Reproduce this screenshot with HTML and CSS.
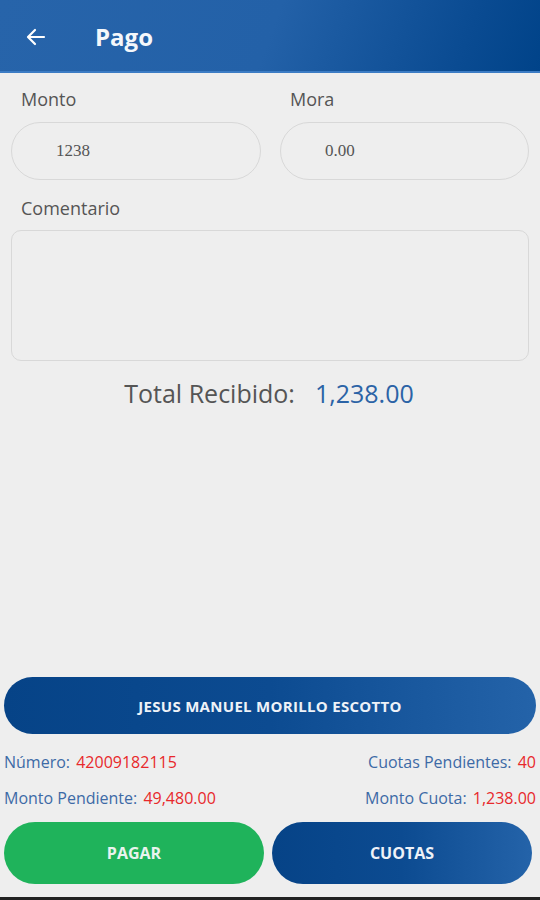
FILE: index.html
```html
<!DOCTYPE html>
<html lang="es">
<head>
<meta charset="utf-8">
<title>Pago</title>
<link rel="stylesheet" href="styles.css">
</head>
<body>
<div class="screen">
  <header class="appbar">
    <svg class="back" width="24" height="24" viewBox="0 0 24 24"><path d="M20 12H5M11 5l-7 7 7 7" fill="none" stroke="#fff" stroke-width="2.2" stroke-linecap="round" stroke-linejoin="round"/></svg>
    <h1 class="title">Pago</h1>
  </header>
  <main class="form">
    <div class="row2">
      <div class="field">
        <label class="label">Monto</label>
        <div class="pill-input">1238</div>
      </div>
      <div class="field">
        <label class="label">Mora</label>
        <div class="pill-input">0.00</div>
      </div>
    </div>
    <div class="field comment">
      <label class="label">Comentario</label>
      <div class="textarea"></div>
    </div>
    <div class="total">
      <span class="total-label">Total Recibido:</span>
      <span class="total-value">1,238.00</span>
    </div>
  </main>
  <section class="footer">
    <div class="name-bar">JESUS MANUEL MORILLO ESCOTTO</div>
    <div class="info">
      <div class="info-row">
        <span><span class="k">Número:</span> <span class="v">42009182115</span></span>
        <span><span class="k">Cuotas Pendientes:</span> <span class="v">40</span></span>
      </div>
      <div class="info-row">
        <span><span class="k">Monto Pendiente:</span> <span class="v">49,480.00</span></span>
        <span><span class="k">Monto Cuota:</span> <span class="v">1,238.00</span></span>
      </div>
    </div>
    <div class="actions">
      <button class="btn green">PAGAR</button>
      <button class="btn blue">CUOTAS</button>
    </div>
  </section>
  <div class="navbar"></div>
</div>
</body>
</html>
```
FILE: styles.css
```css
* { box-sizing: border-box; }
html, body { margin: 0; padding: 0; }
body {
  background: #eeeeee;
  font-family: "Open Sans", Lato, sans-serif;
  color: #555;
}
.screen {
  width: 540px;
  height: 900px;
  display: flex;
  flex-direction: column;
  overflow: hidden;
}
.appbar {
  height: 73px;
  flex: none;
  display: flex;
  align-items: center;
  padding: 2px 0 0 24px;
  background: linear-gradient(110deg, #2764aa 0%, #2361a8 50%, #0a4b92 85%, #004389 100%);
  border-bottom: 2px solid #3c7cc4;
}
.back { display: block; }
.title {
  margin: 0 0 0 47px;
  font-family: "Open Sans", sans-serif;
  font-weight: 700;
  font-size: 24px;
  line-height: 30px;
  color: #f4f7fb;
}
.form {
  flex: 1;
  padding: 14px 11px 0 11px;
}
.row2 {
  display: grid;
  grid-template-columns: 250px 249px;
  column-gap: 19px;
}
.label {
  display: block;
  font-size: 18px;
  color: #555;
  padding-left: 10px;
  height: 24px;
  line-height: 24px;
}
.pill-input {
  margin-top: 11px;
  height: 58px;
  border: 1.5px solid #d8d8d8;
  border-radius: 29px;
  padding-left: 44px;
  display: flex;
  align-items: center;
  font-family: "Liberation Serif", serif;
  font-size: 17px;
  color: #555;
}
.comment { margin-top: 16px; }
.textarea {
  margin-top: 10px;
  height: 131px;
  border: 1.5px solid #d8d8d8;
  border-radius: 10px;
}
.total {
  margin-top: 16px;
  display: flex;
  justify-content: center;
  gap: 20px;
  font-size: 25px;
  line-height: 32px;
  padding-right: 2px;
}
.total-label { color: #555; }
.total-value { color: #2b63a6; }
.footer {
  flex: none;
  padding: 0 4px 13px 4px;
}
.name-bar {
  height: 57px;
  border-radius: 29px;
  background: linear-gradient(90deg, #064387 0%, #0c4b91 50%, #2463a9 100%);
  color: #eef2f8;
  font-weight: 700;
  font-size: 15px;
  letter-spacing: 0.3px;
  display: flex;
  align-items: center;
  justify-content: center;
}
.info {
  margin-top: 17px;
  display: flex;
  flex-direction: column;
  gap: 14px;
}
.info-row {
  display: flex;
  justify-content: space-between;
  font-size: 16px;
  line-height: 22px;
}
.k { color: #3d6aa6; }
.v { color: #e8282b; margin-left: 2px; }
.actions {
  margin-top: 13px;
  display: grid;
  grid-template-columns: 260px 260px;
  column-gap: 8px;
}
.btn {
  height: 62px;
  border: none;
  border-radius: 31px;
  font-family: "Open Sans", sans-serif;
  font-weight: 700;
  font-size: 16px;
  color: #e9f3ee;
}
.green { background: #1fb35b; }
.blue { background: linear-gradient(90deg, #064387 0%, #0c4b91 50%, #2463a9 100%); color: #eef2f8; }
.navbar {
  height: 3px;
  flex: none;
  background: #222;
}
```
